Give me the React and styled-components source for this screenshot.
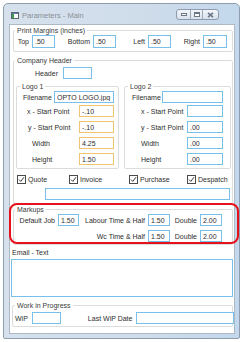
import React from 'react';
import styled, { createGlobalStyle } from 'styled-components';

const GlobalStyle = createGlobalStyle`
  html, body {
    margin: 0;
    padding: 0;
    background: #fff;
  }
  body {
    font-family: "Liberation Sans", Arial, sans-serif;
    font-size: 7px;
    color: #2e2e2e;
  }
  * {
    box-sizing: border-box;
  }
`;

const Page = styled.div`
  position: relative;
  width: 245px;
  height: 342px;
  padding: 3px 0 0 3px;
`;

const Window = styled.div`
  width: 237px;
  height: 336px;
  border: 1px solid #8e9db0;
  border-radius: 5px 5px 2px 2px;
  background: linear-gradient(90deg, #d6e1ed, #cfdcea 60%, #c3d8ec);
  padding: 0 4px 4px 5px;
  display: flex;
  flex-direction: column;
`;

const TitleBar = styled.div`
  height: 20px;
  display: flex;
  align-items: flex-start;
  padding-left: 2px;
`;

const AppIcon = styled.svg`
  margin-top: 8px;
  flex-shrink: 0;
`;

const Title = styled.span`
  margin: 7px 0 0 3px;
  line-height: 10px;
  font-size: 7.5px;
  color: #8a8f96;
`;

const Controls = styled.div`
  margin: 5px 16px 0 auto;
  display: flex;
  border: 1px solid #8d9bb0;
  border-radius: 3px;
  overflow: hidden;
  background: linear-gradient(#f3f6fa, #d9e2ec);
`;

const CtrlButton = styled.div`
  width: ${(p) => p.$w}px;
  height: 9px;
  display: flex;
  align-items: center;
  justify-content: center;
  border-left: ${(p) => (p.$first ? 'none' : '1px solid #9aa8ba')};
`;

const Client = styled.div`
  flex: 1;
  background: #fff;
  border: 1px solid #aeb9c6;
  display: flex;
  flex-direction: column;
`;

const Group = styled.fieldset`
  margin: ${(p) => p.$m || '0'};
  padding: 0;
  border: 1px solid #dcdcdc;
  border-radius: 2px;
  min-width: 0;
`;

const Legend = styled.legend`
  margin-left: ${(p) => p.$ml ?? 1}px;
  padding: 0 2px;
  line-height: 9px;
  font-size: 7px;
  color: #3a3a3a;
`;

const Body = styled.div`
  padding: ${(p) => p.$p || '0'};
`;

const Row = styled.div`
  display: flex;
  align-items: center;
  margin-top: ${(p) => p.$mt || 0}px;
`;

const Pair = styled.div`
  width: ${(p) => p.$w}px;
  display: flex;
  align-items: center;
`;

const Label = styled.span`
  flex: ${(p) => (p.$fixed ? '0 0 auto' : '1')};
  text-align: ${(p) => (p.$right ? 'right' : 'left')};
  padding-left: ${(p) => p.$pl || 0}px;
  padding-right: ${(p) => p.$pr || 0}px;
  margin-left: ${(p) => p.$ml || 0}px;
  line-height: 9px;
  white-space: nowrap;
`;

const Box = styled.input`
  width: ${(p) => p.$w}px;
  height: ${(p) => p.$h || 12}px;
  margin: 0;
  margin-left: ${(p) => p.$ml || 0}px;
  padding: 0 2px;
  border: 1px solid ${(p) => (p.$warn ? '#f1c56f' : '#78bfea')};
  border-radius: 0;
  background: #fff;
  font-family: inherit;
  font-size: 7px;
  color: #2e2e2e;
  outline: none;
  flex-shrink: 0;
`;

const Area = styled.div`
  margin: 2px 1px 0 1px;
  height: 38px;
  border: 1px solid #78bfea;
`;

const LogoRow = styled.div`
  display: flex;
  gap: 5px;
  margin-top: 3px;
`;

const LogoGroup = styled.fieldset`
  margin: 0;
  padding: 0 ${(p) => p.$pr}px 3px 0;
  border: 1px solid #dcdcdc;
  border-radius: 2px;
  min-width: 0;
  width: ${(p) => (p.$w ? `${p.$w}px` : 'auto')};
  flex: ${(p) => (p.$w ? '0 0 auto' : '1')};
`;

const Checks = styled.div`
  display: grid;
  grid-template-columns: 52px 60px 58px 1fr;
  margin: 6px 0 0 1px;
`;

const Check = styled.label`
  display: flex;
  align-items: center;
  gap: 2px;
  line-height: 9px;
`;

const CheckBox = styled.span`
  width: 9px;
  height: 9px;
  border: 1px solid #4a4a4a;
  background: #fff;
  display: flex;
  align-items: center;
  justify-content: center;
`;

const MarkupGrid = styled.div`
  display: grid;
  grid-template-columns: 41px 21px 63px 22px 24px 22px;
  column-gap: 3px;
  row-gap: 4px;
  align-items: center;
  padding: 0 0 2px 0;
`;

const EmailLabel = styled.div`
  margin: 3px 0 0 2px;
  line-height: 9px;
`;

const Highlight = styled.div`
  position: absolute;
  left: 9px;
  top: 203px;
  width: 230px;
  height: 41px;
  border: 2px solid #e5121b;
  border-radius: 8px;
  pointer-events: none;
`;

const Tick = () => (
  <svg width="7" height="7" viewBox="0 0 7 7">
    <path d="M1 3.6 L2.8 5.4 L6 1.2" fill="none" stroke="#3a3a3a" strokeWidth="1" />
  </svg>
);

const CheckItem = ({ children }) => (
  <Check>
    <CheckBox>
      <Tick />
    </CheckBox>
    {children}
  </Check>
);

const LogoField = ({ label, pl, value, w, warn, mt }) => (
  <Row $mt={mt}>
    <Label $pl={pl}>{label}</Label>
    <Box $w={w} $warn={warn} defaultValue={value} readOnly />
  </Row>
);

const margins = [
  { label: 'Top', w: 41, box: 23 },
  { label: 'Bottom', w: 61, box: 23 },
  { label: 'Left', w: 55, box: 23 },
  { label: 'Right', w: 56, box: 24 },
];

const App = () => (
  <Page>
    <GlobalStyle />
    <Window>
      <TitleBar>
        <AppIcon width="8" height="7" viewBox="0 0 8 7">
          <rect x="0.5" y="0.5" width="7" height="6" fill="#fff" stroke="#5b6470" />
          <rect x="1" y="1" width="2" height="5" fill="#3d9a4a" />
          <rect x="1" y="1" width="6" height="1" fill="#5d7fb0" />
        </AppIcon>
        <Title>Parameters - Main</Title>
        <Controls>
          <CtrlButton $w={13} $first>
            <svg width="6" height="3" viewBox="0 0 6 3">
              <rect x="0.5" y="0.5" width="5" height="2" fill="#fff" stroke="#6d7785" />
            </svg>
          </CtrlButton>
          <CtrlButton $w={12}>
            <svg width="6" height="5" viewBox="0 0 6 5">
              <rect x="0.5" y="0.5" width="5" height="4" fill="#fff" stroke="#6d7785" />
              <rect x="1" y="1" width="4" height="1" fill="#6d7785" />
            </svg>
          </CtrlButton>
          <CtrlButton $w={16}>
            <svg width="7" height="6" viewBox="0 0 7 6">
              <path d="M1 0.8 L6 5.2 M6 0.8 L1 5.2" stroke="#6d7785" strokeWidth="1.6" />
            </svg>
          </CtrlButton>
        </Controls>
      </TitleBar>

      <Client>
        <Group $m="1px 1px 0 3px">
          <Legend>Print Margins (inches)</Legend>
          <Body $p="0 0 3px 0">
            <Row>
              {margins.map((m) => (
                <Pair key={m.label} $w={m.w}>
                  <Label $right $pr={3}>{m.label}</Label>
                  <Box $w={m.box} $h={13} defaultValue=".50" readOnly />
                </Pair>
              ))}
            </Row>
          </Body>
        </Group>

        <Group $m="4px 1px 0 3px">
          <Legend>Company Header</Legend>
          <Body $p="0 1px 3px 2px">
            <Row $mt={2}>
              <Label $fixed $pl={19} $pr={5}>Header</Label>
              <Box $w={29} defaultValue="" readOnly />
            </Row>

            <LogoRow>
              <LogoGroup $w={103} $pr={4}>
                <Legend $ml={3}>Logo 1</Legend>
                <LogoField label="Filename" pl={6} w={60} value="OPTO LOGO.jpg" />
                <LogoField label="x - Start Point" pl={10} w={35} value="-.10" warn mt={2} />
                <LogoField label="y - Start Point" pl={11} w={35} value="-.10" warn mt={4} />
                <LogoField label="Width" pl={15} w={35} value="4.25" warn mt={4} />
                <LogoField label="Height" pl={15} w={35} value="1.50" warn mt={4} />
              </LogoGroup>
              <LogoGroup $pr={7}>
                <Legend $ml={3}>Logo 2</Legend>
                <LogoField label="Filename" pl={7} w={61} value="" />
                <LogoField label="x - Start Point" pl={16} w={36} value="" mt={2} />
                <LogoField label="y - Start Point" pl={16} w={36} value=".00" mt={4} />
                <LogoField label="Width" pl={16} w={36} value=".00" mt={4} />
                <LogoField label="Height" pl={16} w={36} value=".00" mt={4} />
              </LogoGroup>
            </LogoRow>

            <Checks>
              <CheckItem>Quote</CheckItem>
              <CheckItem>Invoice</CheckItem>
              <CheckItem>Purchase</CheckItem>
              <CheckItem>Despatch</CheckItem>
            </Checks>

            <Row $mt={4}>
              <Box $w={185} $ml={29} defaultValue="" readOnly />
            </Row>
          </Body>
        </Group>

        <Group $m="1px 1px 0 3px">
          <Legend>Markups</Legend>
          <Body $p="0 0 0 0">
            <MarkupGrid>
              <Label $right>Default Job</Label>
              <Box $w={21} defaultValue="1.50" readOnly />
              <Label $right>Labour Time &amp; Half</Label>
              <Box $w={22} defaultValue="1.50" readOnly />
              <Label $right>Double</Label>
              <Box $w={22} defaultValue="2.00" readOnly />

              <span />
              <span />
              <Label $right>Wc Time &amp; Half</Label>
              <Box $w={22} defaultValue="1.50" readOnly />
              <Label $right>Double</Label>
              <Box $w={22} defaultValue="2.00" readOnly />
            </MarkupGrid>
          </Body>
        </Group>

        <EmailLabel>Email - Text</EmailLabel>
        <Area />

        <Group $m="4px 1px 0 2px">
          <Legend $ml={2}>Work in Progress</Legend>
          <Body $p="0 0 2px 0">
            <Row $mt={2}>
              <Label $fixed $ml={2} $pr={4}>WiP</Label>
              <Box $w={29} defaultValue="" readOnly />
              <Label $fixed $ml={27} $pr={4}>Last WiP Date</Label>
              <Box $w={98} defaultValue="" readOnly />
            </Row>
          </Body>
        </Group>
      </Client>
    </Window>
    <Highlight />
  </Page>
);

export default App;
